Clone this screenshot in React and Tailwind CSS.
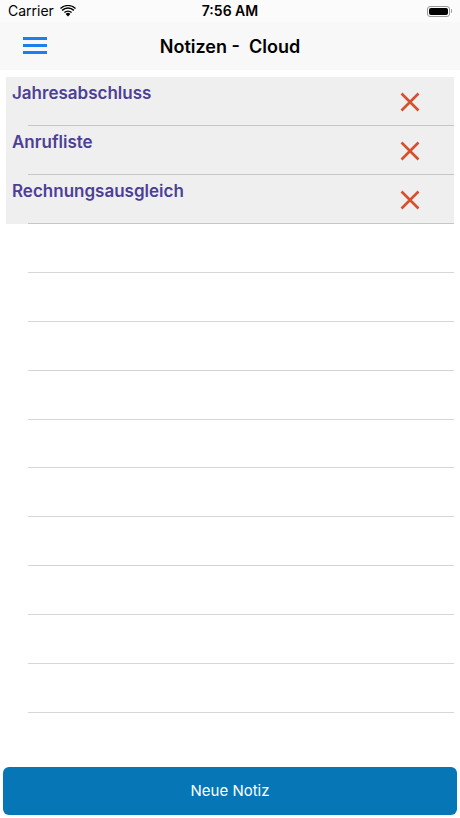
import React from "react";

const notes = ["Jahresabschluss", "Anrufliste", "Rechnungsausgleich"];

function XIcon() {
  return (
    <svg width="20" height="20" viewBox="0 0 20 20">
      <path d="M1.5 1.5 L18.5 18.5 M18.5 1.5 L1.5 18.5" stroke="#d6502d" strokeWidth="2.6" strokeLinecap="butt" />
    </svg>
  );
}

function Wifi() {
  return (
    <svg width="16" height="12" viewBox="0 0 16 12">
      <path d="M8 11.5 L5.6 8.9 A3.4 3.4 0 0 1 10.4 8.9 Z" fill="#000" />
      <path d="M3.9 7.1 A5.9 5.9 0 0 1 12.1 7.1 L11.1 8.1 A4.5 4.5 0 0 0 4.9 8.1 Z" fill="#000" />
      <path d="M1.6 4.8 A9.2 9.2 0 0 1 14.4 4.8 L13.3 5.9 A7.7 7.7 0 0 0 2.7 5.9 Z" fill="#000" />
      <path d="M0 3.1 A11.5 11.5 0 0 1 16 3.1 L15.1 4 A10.2 10.2 0 0 0 0.9 4 Z" fill="#000" />
    </svg>
  );
}

export default function App() {
  const font = { fontFamily: "Inter, 'Liberation Sans', sans-serif" };
  return (
    <div className="w-[460px] h-[818px] bg-white flex flex-col overflow-hidden" style={font}>
      {/* status bar */}
      <div className="h-[22px] bg-[#fbfbfb] flex items-center justify-between relative px-[8px]">
        <div className="flex items-center gap-[6px]">
          <span className="text-[14px] text-black leading-none">Carrier</span>
          <Wifi />
        </div>
        <div className="absolute left-0 right-0 top-0 h-full flex items-center justify-center pointer-events-none">
          <span className="text-[14px] font-semibold text-black leading-none">7:56 AM</span>
        </div>
        <div className="flex items-center">
          <div className="w-[23px] h-[11px] rounded-[3px] border border-[#9a9a9a] p-[1px]">
            <div className="w-full h-full bg-black rounded-[2px]" />
          </div>
          <div className="w-[1.5px] h-[4px] bg-[#9a9a9a] rounded-r ml-[1px]" />
        </div>
      </div>
      {/* nav bar */}
      <div className="h-[48px] bg-[#f8f8f8] flex items-center relative">
        <div className="absolute left-[23px] top-[15px] flex flex-col gap-[4.5px]">
          <div className="w-[24px] h-[2.7px] bg-[#1a80f0]" />
          <div className="w-[24px] h-[2.7px] bg-[#1a80f0]" />
          <div className="w-[24px] h-[2.7px] bg-[#1a80f0]" />
        </div>
        <div className="flex-1 text-center text-[18px] font-semibold text-black whitespace-pre">Notizen -  Cloud</div>
      </div>
      <div className="h-[7px]" />
      {/* list */}
      <div className="mx-[6px] flex flex-col">
        {notes.map((n) => (
          <div key={n} className="h-[49px] bg-[#efefef] relative flex">
            <div className="flex-1 pl-[6px] pt-[5px] text-[17px] font-semibold text-[#4d3f97] leading-[22px]">{n}</div>
            <div className="w-[88px] flex items-center justify-center pt-[1px]">
              <XIcon />
            </div>
            <div className="absolute left-[22px] right-0 bottom-0 h-px bg-[#c6c6c6]" />
          </div>
        ))}
        {Array.from({ length: 10 }).map((_, i) => (
          <div key={i} className="h-[48.9px] relative">
            <div className="absolute left-[22px] right-0 bottom-0 h-px bg-[#d6d6d6]" />
          </div>
        ))}
      </div>
      <div className="flex-1" />
      <div className="mx-[3px] mb-[3px] h-[48px] rounded-[6px] bg-[#0676b7] flex items-center justify-center">
        <span className="text-white text-[15px]">Neue Notiz</span>
      </div>
    </div>
  );
}
